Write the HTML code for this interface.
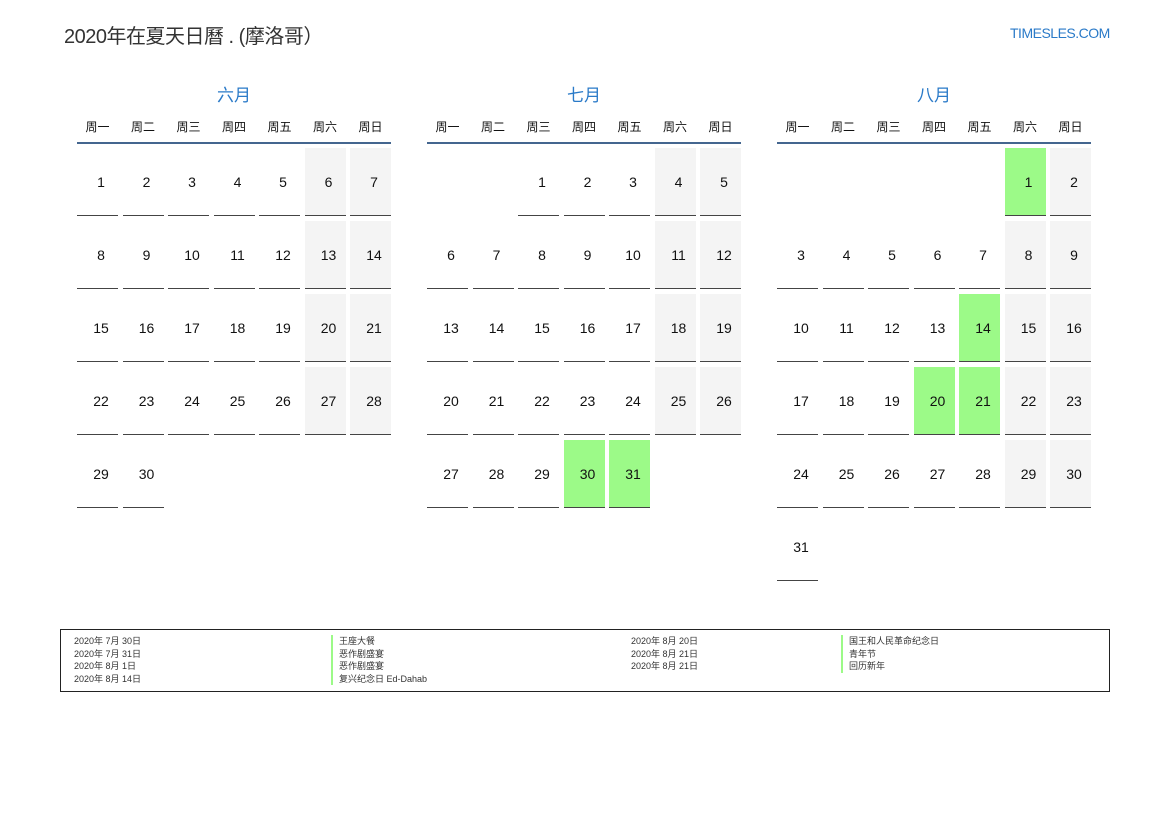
<!DOCTYPE html>
<html><head><meta charset="utf-8"><style>
*{margin:0;padding:0;box-sizing:border-box}
body{width:1169px;height:827px;background:#fff;position:relative;font-family:"Liberation Sans","Noto Sans CJK SC",sans-serif;color:#111}
.title{position:absolute;left:64px;top:20px;font-size:20px;color:#333;letter-spacing:-0.5px}
.logo{position:absolute;left:1010px;top:25px;font-size:14px;color:#2a7ac8;letter-spacing:-0.5px}
.m{position:absolute;top:84px;width:314px}
.mt{text-align:center;font-size:17px;color:#2a7ac8;height:25px;line-height:24px}
.wd{display:grid;grid-template-columns:repeat(7,41px);column-gap:4.5px;font-size:12px;text-align:center;height:35px;line-height:36px;border-bottom:2px solid #44668f}
.g{display:grid;grid-template-columns:repeat(7,41px);column-gap:4.5px;row-gap:5px;margin-top:4px}
.g div{height:68px;line-height:68px;text-align:center;font-size:14px;border-bottom:1px solid #444;padding-left:7px}
.g div.e{border-bottom:none}
.g .w{background:#f4f4f4}
.g .h{background:#9cfa88}
.leg{position:absolute;left:60px;top:629px;width:1050px;height:63px;border:1px solid #222;font-size:9px;color:#333}
.leg span{position:absolute;line-height:12.5px}
.b{border-left:2px solid #9cfa88;padding-left:6px}
</style></head><body>
<div class="title">2020年在夏天日曆 . (摩洛哥）</div>
<div class="logo">TIMESLES.COM</div>

<div class="m" style="left:77px"><div class="mt">六月</div>
<div class="wd"><span>周一</span><span>周二</span><span>周三</span><span>周四</span><span>周五</span><span>周六</span><span>周日</span></div>
<div class="g">
<div>1</div><div>2</div><div>3</div><div>4</div><div>5</div><div class="w">6</div><div class="w">7</div>
<div>8</div><div>9</div><div>10</div><div>11</div><div>12</div><div class="w">13</div><div class="w">14</div>
<div>15</div><div>16</div><div>17</div><div>18</div><div>19</div><div class="w">20</div><div class="w">21</div>
<div>22</div><div>23</div><div>24</div><div>25</div><div>26</div><div class="w">27</div><div class="w">28</div>
<div>29</div><div>30</div>
</div></div>

<div class="m" style="left:427px"><div class="mt">七月</div>
<div class="wd"><span>周一</span><span>周二</span><span>周三</span><span>周四</span><span>周五</span><span>周六</span><span>周日</span></div>
<div class="g">
<div class="e"></div><div class="e"></div><div>1</div><div>2</div><div>3</div><div class="w">4</div><div class="w">5</div>
<div>6</div><div>7</div><div>8</div><div>9</div><div>10</div><div class="w">11</div><div class="w">12</div>
<div>13</div><div>14</div><div>15</div><div>16</div><div>17</div><div class="w">18</div><div class="w">19</div>
<div>20</div><div>21</div><div>22</div><div>23</div><div>24</div><div class="w">25</div><div class="w">26</div>
<div>27</div><div>28</div><div>29</div><div class="h">30</div><div class="h">31</div>
</div></div>

<div class="m" style="left:777px"><div class="mt">八月</div>
<div class="wd"><span>周一</span><span>周二</span><span>周三</span><span>周四</span><span>周五</span><span>周六</span><span>周日</span></div>
<div class="g">
<div class="e"></div><div class="e"></div><div class="e"></div><div class="e"></div><div class="e"></div><div class="h">1</div><div class="w">2</div>
<div>3</div><div>4</div><div>5</div><div>6</div><div>7</div><div class="w">8</div><div class="w">9</div>
<div>10</div><div>11</div><div>12</div><div>13</div><div class="h">14</div><div class="w">15</div><div class="w">16</div>
<div>17</div><div>18</div><div>19</div><div class="h">20</div><div class="h">21</div><div class="w">22</div><div class="w">23</div>
<div>24</div><div>25</div><div>26</div><div>27</div><div>28</div><div class="w">29</div><div class="w">30</div>
<div>31</div>
</div></div>

<div class="leg">
<span style="left:13px;top:5px">2020年 7月 30日<br>2020年 7月 31日<br>2020年 8月 1日<br>2020年 8月 14日</span>
<span style="left:270px;top:5px" class="b">王座大餐<br>恶作剧盛宴<br>恶作剧盛宴<br>复兴纪念日 Ed-Dahab</span>
<span style="left:570px;top:5px">2020年 8月 20日<br>2020年 8月 21日<br>2020年 8月 21日</span>
<span style="left:780px;top:5px" class="b">国王和人民革命纪念日<br>青年节<br>回历新年</span>
</div>
</body></html>
